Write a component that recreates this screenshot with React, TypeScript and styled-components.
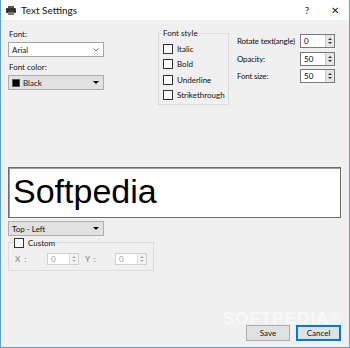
import React from 'react'
import styled, { createGlobalStyle } from 'styled-components'

const GlobalStyle = createGlobalStyle`
  html, body {
    margin: 0;
    padding: 0;
    background: #f0f0f0;
  }
  * {
    box-sizing: border-box;
  }
`

const Window = styled.div`
  position: relative;
  width: 350px;
  height: 348px;
  display: flex;
  flex-direction: column;
  background: #f0f0f0;
  border: 1px solid #5a9fe0;
  border-top: none;
  font-family: Lato, 'Liberation Sans', sans-serif;
  font-size: 8px;
  color: #111;
  white-space: nowrap;
  overflow: hidden;
`

const TitleBar = styled.div`
  height: 20px;
  background: #fff;
  display: flex;
  align-items: center;
  padding-left: 5px;
  font-size: 10px;
`

const Title = styled.span`
  margin-left: 5px;
  flex: 1;
`

const TitleButton = styled.span`
  width: 28px;
  text-align: center;
  font-size: 10px;
  color: #222;
`

const Body = styled.div`
  flex: 1;
  display: flex;
  flex-direction: column;
  padding: 8px 7px 6px 7px;
`

const TopRow = styled.div`
  display: flex;
  align-items: flex-start;
  height: 80px;
`

const LeftCol = styled.div`
  width: 96px;
  display: flex;
  flex-direction: column;
  padding-top: 1px;
`

const Label = styled.div<{ $gap?: number }>`
  height: 10px;
  line-height: 10px;
  margin-top: ${p => p.$gap ?? 0}px;
  margin-bottom: 3px;
  padding-left: 1px;
`

const Select = styled.div`
  height: 15px;
  background: #fff;
  border: 1px solid #a6a6a6;
  display: flex;
  align-items: center;
  padding: 0 4px 0 3px;
  justify-content: space-between;
`

const DropButton = styled.div`
  height: 15px;
  width: 96px;
  background: #e1e1e1;
  border: 1px solid #adadad;
  display: flex;
  align-items: center;
  padding: 0 4px 0 3px;
  gap: 3px;
`

const Swatch = styled.span`
  width: 8px;
  height: 8px;
  background: #000;
  border: 1px solid #555;
`

const Grow = styled.span`
  flex: 1;
`

const Caret = styled.span`
  width: 0;
  height: 0;
  border-left: 3px solid transparent;
  border-right: 3px solid transparent;
  border-top: 3px solid #000;
`

const GroupBox = styled.fieldset`
  margin: 0 0 0 54px;
  width: 71px;
  height: 77px;
  border: 1px solid #dcdcdc;
  padding: 5px 0 0 4px;
  display: flex;
  flex-direction: column;
  gap: 4.5px;
`

const Legend = styled.legend`
  padding: 0 1px;
  margin-left: -1px;
  color: #111;
`

const CheckRow = styled.label`
  display: flex;
  align-items: center;
  gap: 4px;
  height: 11px;
  color: ${p => (p.color ? p.color : '#111')};
`

const Box = styled.span`
  width: 10px;
  height: 10px;
  background: #fff;
  border: 1px solid #333;
`

const RightCol = styled.div`
  margin-left: 8px;
  display: flex;
  flex-direction: column;
  gap: 3.5px;
  padding-top: 6px;
  letter-spacing: -0.2px;
`

const FieldRow = styled.div`
  display: flex;
  align-items: center;
  height: 14px;
  width: 98px;
  justify-content: space-between;
`

const Spin = styled.div<{ $width: number; $disabled?: boolean }>`
  width: ${p => p.$width}px;
  height: ${p => (p.$disabled ? 12 : 14)}px;
  background: #fff;
  border: 1px solid ${p => (p.$disabled ? '#cfcfcf' : '#7a7a7a')};
  display: flex;
  align-items: center;
  padding-left: 3px;
  letter-spacing: 0;
  color: ${p => (p.$disabled ? '#9a9a9a' : '#000')};
`

const SpinArrows = styled.div<{ $disabled?: boolean }>`
  width: 9px;
  height: 100%;
  margin-left: auto;
  background: ${p => (p.$disabled ? '#f4f4f4' : '#e6e6e6')};
  border-left: 1px solid ${p => (p.$disabled ? '#e0e0e0' : '#c8c8c8')};
  display: flex;
  flex-direction: column;
  align-items: center;
  justify-content: center;
  gap: 2px;
`

const Up = styled.span<{ $disabled?: boolean }>`
  border-left: 2px solid transparent;
  border-right: 2px solid transparent;
  border-bottom: 2px solid ${p => (p.$disabled ? '#b0b0b0' : '#333')};
`

const Down = styled.span<{ $disabled?: boolean }>`
  border-left: 2px solid transparent;
  border-right: 2px solid transparent;
  border-top: 2px solid ${p => (p.$disabled ? '#b0b0b0' : '#333')};
`

const Preview = styled.div`
  margin-top: 59px;
  margin-right: 1px;
  height: 51px;
  background: #fff;
  border: 1px solid #6d6d6d;
  box-shadow: inset 1px 1px 0 #a0a0a0;
  display: flex;
  align-items: center;
  padding-left: 4px;
  font-family: 'Liberation Sans', Arial, sans-serif;
  font-size: 34px;
  color: #000;
  padding-bottom: 2px;
`

const PositionRow = styled.div`
  margin-top: 3px;
`

const CustomGroup = styled.fieldset`
  margin: 1px 0 0 0;
  width: 146px;
  height: 34px;
  border: 1px solid #dcdcdc;
  padding: 5px 0 0 6px;
  display: flex;
  align-items: center;
  color: #9a9a9a;
`

const CustomLegend = styled.legend`
  padding: 0;
  margin-left: -1px;
`

const Coord = styled.span<{ $width: number; $gap?: number }>`
  width: ${p => p.$width}px;
  margin-left: ${p => p.$gap ?? 0}px;
  letter-spacing: 1px;
  font-weight: bold;
`

const Footer = styled.div`
  margin-top: auto;
  display: flex;
  justify-content: flex-end;
  gap: 6px;
  padding-right: 1px;
`

const Button = styled.div<{ $primary?: boolean }>`
  width: ${p => (p.$primary ? 45 : 44)}px;
  height: 16px;
  background: #e1e1e1;
  border: ${p => (p.$primary ? '2px solid #0078d7' : '1px solid #adadad')};
  display: flex;
  align-items: center;
  justify-content: center;
`

const Watermark = styled.div`
  position: absolute;
  left: 222px;
  top: 309px;
  font-family: 'Liberation Sans', Arial, sans-serif;
  font-weight: bold;
  font-size: 17px;
  letter-spacing: 1px;
  color: rgba(255, 255, 255, 0.6);
  pointer-events: none;
`

const PrinterIcon = () => (
  <svg width="10" height="9" viewBox="0 0 10 9">
    <rect x="2" y="0" width="6" height="2" fill="#555" />
    <rect x="0" y="2" width="10" height="5" rx="1" fill="#333" />
    <rect x="2" y="6" width="6" height="3" fill="#777" />
  </svg>
)

const SpinBox = ({ value, width, disabled }: { value: string; width: number; disabled?: boolean }) => (
  <Spin $width={width} $disabled={disabled}>
    {value}
    <SpinArrows $disabled={disabled}>
      <Up $disabled={disabled} />
      <Down $disabled={disabled} />
    </SpinArrows>
  </Spin>
)

function App() {
  return (
    <>
      <GlobalStyle />
      <Window>
        <TitleBar>
          <PrinterIcon />
          <Title>Text Settings</Title>
          <TitleButton>?</TitleButton>
          <TitleButton>✕</TitleButton>
        </TitleBar>
        <Body>
          <TopRow>
            <LeftCol>
              <Label>Font:</Label>
              <Select>
                Arial
                <svg width="6" height="4" viewBox="0 0 6 4">
                  <path d="M0.5 0.5 L3 3 L5.5 0.5" fill="none" stroke="#444" strokeWidth="0.8" />
                </svg>
              </Select>
              <Label $gap={5}>Font color:</Label>
              <DropButton>
                <Swatch />
                <Grow>Black</Grow>
                <Caret />
              </DropButton>
            </LeftCol>
            <GroupBox>
              <Legend>Font style</Legend>
              {['Italic', 'Bold', 'Underline', 'Strikethrough'].map(name => (
                <CheckRow key={name}>
                  <Box />
                  {name}
                </CheckRow>
              ))}
            </GroupBox>
            <RightCol>
              <FieldRow>
                Rotate text(angle)
                <SpinBox value="0" width={35} />
              </FieldRow>
              <FieldRow>
                Opacity:
                <SpinBox value="50" width={35} />
              </FieldRow>
              <FieldRow>
                Font size:
                <SpinBox value="50" width={35} />
              </FieldRow>
            </RightCol>
          </TopRow>
          <Preview>Softpedia</Preview>
          <PositionRow>
            <DropButton>
              <Grow>Top - Left</Grow>
              <Caret />
            </DropButton>
          </PositionRow>
          <CustomGroup>
            <CustomLegend>
              <CheckRow color="#111">
                <Box />
                Custom
              </CheckRow>
            </CustomLegend>
            <Coord $width={32}>X :</Coord>
            <SpinBox value="0" width={32} disabled />
            <Coord $width={30} $gap={6}>Y :</Coord>
            <SpinBox value="0" width={32} disabled />
          </CustomGroup>
          <Footer>
            <Button>Save</Button>
            <Button $primary>Cancel</Button>
          </Footer>
        </Body>
        <Watermark>SOFTPEDIA®</Watermark>
      </Window>
    </>
  )
}

export default App
